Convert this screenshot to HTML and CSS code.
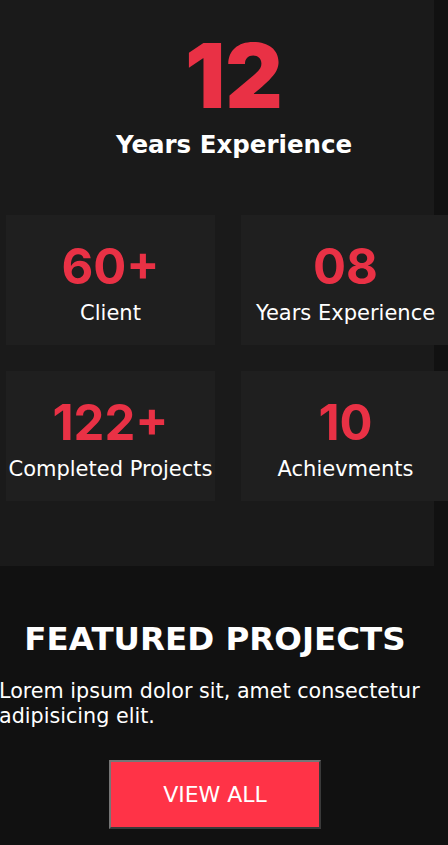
FILE: index.html
```html
<!DOCTYPE html>
<html lang="en">
<head>
<meta charset="utf-8">
<title>Stats</title>
<link rel="stylesheet" href="styles.css">
</head>
<body>
<section class="stats">
  <div class="hero">
    <div class="hero-num">12</div>
    <div class="hero-label">Years Experience</div>
  </div>
  <div class="grid">
    <div class="card"><div class="num">60+</div><div class="label">Client</div></div>
    <div class="card"><div class="num">08</div><div class="label">Years Experience</div></div>
    <div class="card"><div class="num">122+</div><div class="label">Completed Projects</div></div>
    <div class="card"><div class="num">10</div><div class="label">Achievments</div></div>
  </div>
</section>
<section class="featured">
  <h2 class="title">FEATURED PROJECTS</h2>
  <p class="text">Lorem ipsum dolor sit, amet consectetur adipisicing elit.</p>
  <div class="actions"><button class="btn">VIEW ALL</button></div>
</section>
</body>
</html>
```
FILE: styles.css
```css
html, body {
  margin: 0;
  padding: 0;
}
body {
  background: #111111;
  overflow-x: hidden;
  font-family: "DejaVu Sans", "Noto Sans", sans-serif;
  color: #ffffff;
}
.stats {
  width: 434px;
  background: #1a1a1a;
  padding: 31px 0 65px;
  box-sizing: border-box;
  height: 566px;
}
.hero {
  padding-left: 34px;
  text-align: center;
}
.hero-num {
  font-family: Inter, "Liberation Sans", sans-serif;
  font-weight: 900;
  font-size: 89px;
  line-height: 1;
  color: #e93145;
}
.hero-label {
  margin-top: 10px;
  font-weight: 700;
  font-size: 24.5px;
  line-height: 30px;
}
.grid {
  margin: 55px 0 0 6px;
  width: 444px;
  display: grid;
  grid-template-columns: 209px 209px;
  gap: 26px;
}
.card {
  background: #1f1f1f;
  height: 130px;
  box-sizing: border-box;
  padding-top: 27px;
  display: flex;
  flex-direction: column;
  align-items: center;
}
.num {
  font-family: Inter, "Liberation Sans", sans-serif;
  font-weight: 700;
  font-size: 49px;
  line-height: 1;
  color: #e93145;
}
.label {
  margin-top: 9px;
  font-size: 21px;
  line-height: 26px;
  white-space: nowrap;
}
.featured {
  width: 430px;
  padding-top: 53px;
}
.title {
  margin: 0;
  text-align: center;
  font-weight: 700;
  font-size: 32.5px;
  line-height: 40px;
}
.text {
  margin: 20px 0 0 -1px;
  width: 440px;
  font-size: 20.7px;
  line-height: 25px;
}
.actions {
  margin-top: 31px;
  display: flex;
  justify-content: center;
}
.btn {
  width: 212px;
  height: 69px;
  box-sizing: border-box;
  background: #ff3347;
  color: #ffffff;
  font-family: "DejaVu Sans", sans-serif;
  font-size: 22px;
  border-style: solid;
  border-width: 2px;
  border-color: #767676 #3a3a3a #3a3a3a #767676;
  padding: 0;
}
```
